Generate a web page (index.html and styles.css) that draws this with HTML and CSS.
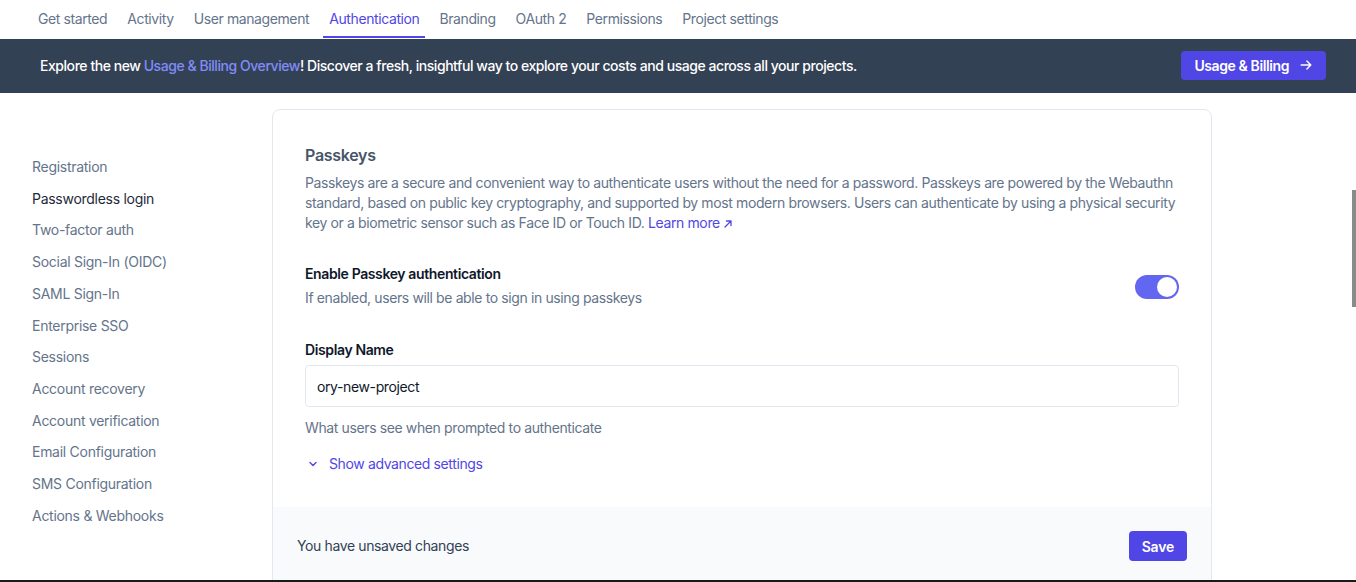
FILE: index.html
```html
<!DOCTYPE html>
<html lang="en">
<head>
<meta charset="utf-8">
<title>Authentication - Passkeys</title>
<link rel="stylesheet" href="styles.css">
</head>
<body>
<nav class="topnav">
  <a class="tab">Get started</a>
  <a class="tab">Activity</a>
  <a class="tab">User management</a>
  <a class="tab active">Authentication</a>
  <a class="tab">Branding</a>
  <a class="tab">OAuth 2</a>
  <a class="tab">Permissions</a>
  <a class="tab">Project settings</a>
</nav>
<div class="banner">
  <p class="banner-text">Explore the new <a class="banner-link">Usage &amp; Billing Overview</a>! Discover a fresh, insightful way to explore your costs and usage across all your projects.</p>
  <button class="banner-btn">Usage &amp; Billing
    <svg width="14" height="14" viewBox="0 0 16 16" fill="none" stroke="currentColor" stroke-width="1.6" stroke-linecap="round" stroke-linejoin="round"><path d="M2.5 8h11M9 3.5 13.5 8 9 12.5"/></svg>
  </button>
</div>
<div class="main">
  <aside class="sidebar">
    <a class="side-item">Registration</a>
    <a class="side-item current">Passwordless login</a>
    <a class="side-item">Two-factor auth</a>
    <a class="side-item">Social Sign-In (OIDC)</a>
    <a class="side-item">SAML Sign-In</a>
    <a class="side-item">Enterprise SSO</a>
    <a class="side-item">Sessions</a>
    <a class="side-item">Account recovery</a>
    <a class="side-item">Account verification</a>
    <a class="side-item">Email Configuration</a>
    <a class="side-item">SMS Configuration</a>
    <a class="side-item">Actions &amp; Webhooks</a>
  </aside>
  <section class="card">
    <div class="card-body">
      <h2 class="card-title">Passkeys</h2>
      <p class="card-desc"><span>Passkeys are a secure and convenient way to authenticate users without the need for a password. Passkeys are powered by the Webauthn standard, based on public key cryptography, and supported by most modern browsers. Users can authenticate by using a physical security key or a biometric sensor such as Face ID or Touch ID.</span> <a class="learn">Learn more <svg width="10" height="10" viewBox="0 0 10 10" fill="none" stroke="currentColor" stroke-width="1.3" stroke-linecap="round" stroke-linejoin="round"><path d="M2 8 8 2M3.5 2H8v4.5"/></svg></a></p>

      <div class="setting-row">
        <div class="setting-text">
          <div class="setting-title">Enable Passkey authentication</div>
          <div class="setting-sub">If enabled, users will be able to sign in using passkeys</div>
        </div>
        <div class="toggle"><span class="knob"></span></div>
      </div>

      <div class="field">
        <label class="field-label">Display Name</label>
        <div class="input">ory-new-project</div>
        <div class="field-help">What users see when prompted to authenticate</div>
      </div>

      <a class="advanced">
        <svg width="12" height="12" viewBox="0 0 12 12" fill="none" stroke="currentColor" stroke-width="1.4" stroke-linecap="round" stroke-linejoin="round"><path d="M3 4.5 6 7.5 9 4.5"/></svg>
        Show advanced settings
      </a>
    </div>
    <div class="card-footer">
      <span class="unsaved">You have unsaved changes</span>
      <button class="save-btn">Save</button>
    </div>
  </section>
</div>
<div class="scroll-thumb"></div>
<div class="bottom-strip"></div>
</body>
</html>
```
FILE: styles.css
```css
* { box-sizing: border-box; }
html, body { margin: 0; padding: 0; }
body {
  font-family: Inter, "Noto Sans", "Liberation Sans", sans-serif;
  font-size: 14px;
  color: #0f172a;
  background: #ffffff;
  height: 582px;
  overflow: hidden;
  letter-spacing: -0.38px;
}
a { text-decoration: none; cursor: pointer; }

.topnav {
  display: flex;
  gap: 8px;
  height: 39px;
  padding-left: 32px;
  background: #fff;
}
.tab {
  display: flex;
  align-items: center;
  padding: 0 6px;
  height: 38px;
  color: #64748b;
  font-size: 14px;
  letter-spacing: -0.4px;
  border-bottom: 2px solid transparent;
  padding-top: 1px;
}
.tab.active {
  color: #4f46e5;
  border-bottom-color: #4f46e5;
}

.banner {
  display: flex;
  align-items: center;
  justify-content: space-between;
  height: 54px;
  background: #334155;
  padding: 0 30px 2px 40px;
}
.banner-text {
  margin: 0;
  color: #ffffff;
  font-size: 14px;
  font-weight: 500;
  letter-spacing: -0.45px;
}
.banner-link { color: #818cf8; }
.banner-btn {
  display: flex;
  align-items: center;
  gap: 10px;
  height: 29px;
  padding: 0 13px 0 13px;
  background: #4f46e5;
  color: #fff;
  border: none;
  border-radius: 4px;
  font-family: inherit;
  font-size: 14px;
  font-weight: 600;
  letter-spacing: -0.4px;
}

.main {
  display: flex;
  align-items: flex-start;
}
.sidebar {
  width: 272px;
  flex: none;
  padding: 58px 0 0 32px;
  display: flex;
  flex-direction: column;
}
.side-item {
  display: block;
  padding: 6px 0;
  line-height: 19.7px;
  font-size: 14px;
  color: #64748b;
  letter-spacing: -0.28px;
}
.side-item.current { color: #1e293b; }

.card {
  margin-top: 16px;
  width: 940px;
  height: 500px;
  border: 1px solid #e2e8f0;
  border-radius: 8px;
  display: flex;
  flex-direction: column;
  overflow: hidden;
}
.card-body {
  padding: 33px 32px 33px 32px;
}
.card-title {
  margin: 0;
  font-size: 16px;
  line-height: 24px;
  font-weight: 600;
  color: #475569;
  letter-spacing: -0.3px;
}
.card-desc {
  margin: 6px 0 0;
  font-size: 14px;
  line-height: 20px;
  color: #64748b;
}
.learn { color: #4f46e5; white-space: nowrap; }
.learn svg { vertical-align: -1px; }

.setting-row {
  display: flex;
  align-items: center;
  justify-content: space-between;
  margin-top: 31px;
}
.setting-title {
  font-weight: 600;
  line-height: 20px;
  color: #0f172a;
}
.setting-sub {
  margin-top: 4px;
  line-height: 20px;
  color: #64748b;
}
.toggle {
  width: 44px;
  height: 24px;
  border-radius: 12px;
  background: #6366f1;
  padding: 2px;
  display: flex;
  justify-content: flex-end;
  margin-top: 2px;
}
.knob {
  width: 20px;
  height: 20px;
  border-radius: 50%;
  background: #fff;
}

.field { margin-top: 32px; }
.field-label {
  display: block;
  font-weight: 600;
  line-height: 20px;
  color: #0f172a;
}
.input {
  margin-top: 5px;
  height: 42px;
  border: 1px solid #e2e8f0;
  border-radius: 4px;
  padding: 0 11px;
  display: flex;
  align-items: center;
  color: #0f172a;
}
.field-help {
  margin-top: 11px;
  line-height: 20px;
  color: #64748b;
}
.advanced {
  display: flex;
  align-items: center;
  gap: 10px;
  margin-top: 16px;
  padding-left: 2px;
  line-height: 20px;
  color: #4f46e5;
}

.card-footer {
  flex: 1;
  background: #f8fafc;
  display: flex;
  align-items: flex-start;
  justify-content: space-between;
  padding: 24px 24px;
}
.unsaved {
  line-height: 30px;
  color: #334155;
}
.save-btn {
  height: 30px;
  padding: 0 13px;
  background: #4f46e5;
  color: #fff;
  border: none;
  border-radius: 4px;
  font-family: inherit;
  font-size: 14px;
  font-weight: 600;
  letter-spacing: -0.2px;
}

.scroll-thumb {
  position: fixed;
  right: 0;
  top: 190px;
  width: 4px;
  height: 117px;
  background: #8a8a8a;
}
.bottom-strip {
  position: fixed;
  left: 0;
  right: 0;
  bottom: 0;
  height: 2px;
  background: #1a1a1a;
}
```
